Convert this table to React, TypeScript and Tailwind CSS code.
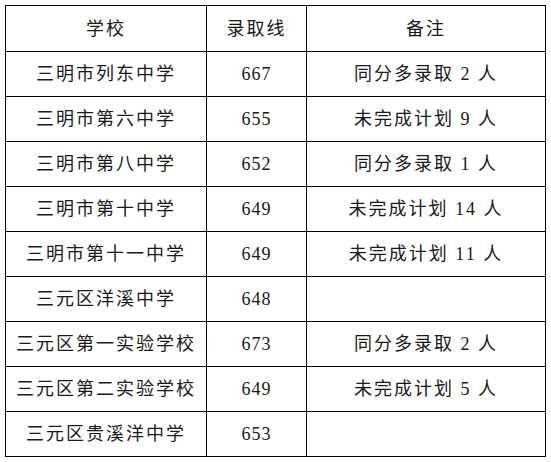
const rows: [string, string, string][] = [
  ['三明市列东中学', '667', '同分多录取 2 人'],
  ['三明市第六中学', '655', '未完成计划 9 人'],
  ['三明市第八中学', '652', '同分多录取 1 人'],
  ['三明市第十中学', '649', '未完成计划 14 人'],
  ['三明市第十一中学', '649', '未完成计划 11 人'],
  ['三元区洋溪中学', '648', ''],
  ['三元区第一实验学校', '673', '同分多录取 2 人'],
  ['三元区第二实验学校', '649', '未完成计划 5 人'],
  ['三元区贵溪洋中学', '653', ''],
];

export default function App() {
  return (
    <div className="w-[551px] h-[462px] bg-white pl-[5px] pt-[5px] text-[#1a1a1a] font-['Liberation_Serif','Noto_Sans_CJK_SC',serif]">
      <table className="border-collapse table-fixed w-[540px] text-[18px] leading-none">
        <colgroup>
          <col className="w-[201px]" />
          <col className="w-[100px]" />
          <col className="w-[239px]" />
        </colgroup>
        <thead>
          <tr className="h-[46px]">
            <th className="border border-black font-normal text-center tracking-[2px]">学校</th>
            <th className="border border-black font-normal text-center tracking-[2px]">录取线</th>
            <th className="border border-black font-normal text-center tracking-[2px]">备注</th>
          </tr>
        </thead>
        <tbody>
          {rows.map(([school, score, note]) => (
            <tr key={school} className="h-[45px]">
              <td className="border border-black text-center tracking-[2px] whitespace-nowrap">{school}</td>
              <td className="border border-black text-center tracking-[1px]">{score}</td>
              <td className="border border-black text-center tracking-[2px] whitespace-nowrap">{note}</td>
            </tr>
          ))}
        </tbody>
      </table>
    </div>
  );
}
